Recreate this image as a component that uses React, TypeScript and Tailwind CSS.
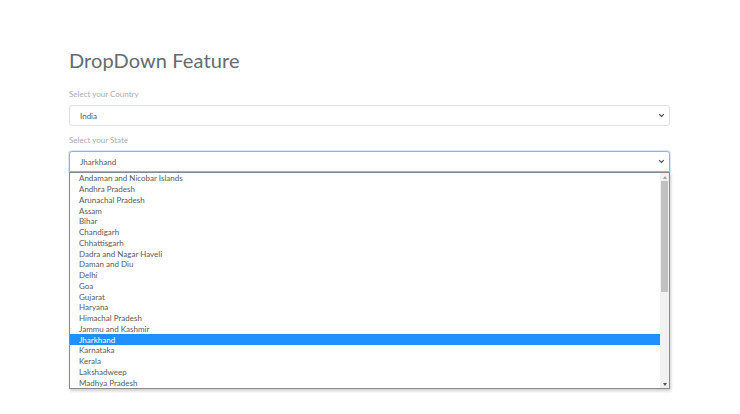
import React from 'react';

const states = [
  'Andaman and Nicobar Islands',
  'Andhra Pradesh',
  'Arunachal Pradesh',
  'Assam',
  'Bihar',
  'Chandigarh',
  'Chhattisgarh',
  'Dadra and Nagar Haveli',
  'Daman and Diu',
  'Delhi',
  'Goa',
  'Gujarat',
  'Haryana',
  'Himachal Pradesh',
  'Jammu and Kashmir',
  'Jharkhand',
  'Karnataka',
  'Kerala',
  'Lakshadweep',
  'Madhya Pradesh',
];

const Chevron: React.FC = () => (
  <svg width="7" height="5" viewBox="0 0 7 5" className="shrink-0">
    <path d="M1.2 1.2 L3.5 3.4 L5.8 1.2" fill="none" stroke="#444" strokeWidth="1.1" />
  </svg>
);

const SelectBox: React.FC<{ value: string, focused?: boolean }> = ({ value, focused }) => (
  <div
    className={
      focused
        ? 'h-[21px] flex items-center justify-between pl-[10px] pr-[4px] bg-white border border-[#86b7f0] rounded-t-[3px] shadow-[0_0_0_1px_rgba(128,189,255,0.35)]'
        : 'h-[21px] flex items-center justify-between pl-[10px] pr-[4px] bg-white border border-[#dcdfe3] rounded-[3px]'
    }
  >
    <span className="text-[8px] text-[#555b61]">{value}</span>
    <Chevron />
  </div>
);

export default function App() {
  return (
    <div className="w-[740px] h-[414px] bg-white overflow-hidden font-['Lato','Liberation_Sans',sans-serif]">
      <div className="pl-[69px] pr-[70px] pt-[47px]">
        <h1 className="text-[20px] leading-[26px] text-[#646b72] tracking-[0.1px]">DropDown Feature</h1>

        <div className="mt-[16px] text-[8px] leading-[10px] text-[#a9adb1]">Select your Country</div>
        <div className="mt-[6px]">
          <SelectBox value="India" />
        </div>

        <div className="mt-[9px] text-[8px] leading-[10px] text-[#a9adb1]">Select your State</div>
        <div className="mt-[6px] relative">
          <SelectBox value="Jharkhand" focused />
          <div className="absolute left-0 right-0 top-[21px] h-[217px] bg-white border border-[#8a8a8a] shadow-[1px_2px_3px_rgba(0,0,0,0.2)] flex">
            <ul className="flex-1">
              {states.map((s) => (
                <li
                  key={s}
                  className={
                    s === 'Jharkhand'
                      ? 'h-[10.75px] flex items-center pl-[9px] text-[8px] text-white bg-[#1e90ff]'
                      : 'h-[10.75px] flex items-center pl-[9px] text-[8px] text-[#5a5a5a]'
                  }
                >
                  {s}
                </li>
              ))}
            </ul>
            <div className="w-[9px] bg-[#f1f1f1] flex flex-col items-center">
              <div className="h-[8px] flex items-center justify-center">
                <div className="w-0 h-0 border-l-[2.5px] border-r-[2.5px] border-b-[3px] border-l-transparent border-r-transparent border-b-[#a3a3a3]" />
              </div>
              <div className="w-[7px] h-[111px] bg-[#c1c1c1]" />
              <div className="flex-1" />
              <div className="h-[8px] flex items-center justify-center">
                <div className="w-0 h-0 border-l-[2.5px] border-r-[2.5px] border-t-[3px] border-l-transparent border-r-transparent border-t-[#505050]" />
              </div>
            </div>
          </div>
        </div>
      </div>
    </div>
  );
}
